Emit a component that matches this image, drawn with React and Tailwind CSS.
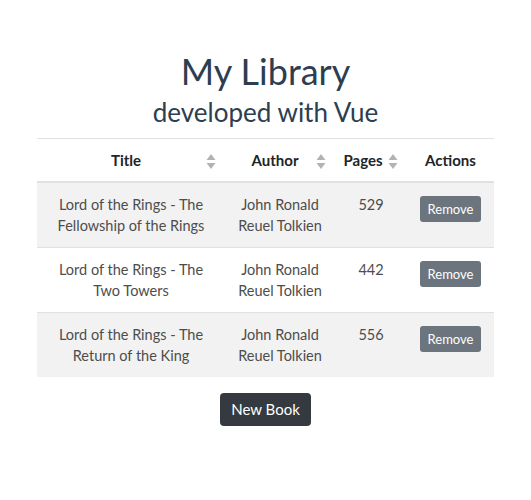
import React from "react";

const books = [
  { title: "Lord of the Rings - The Fellowship of the Rings", author: "John Ronald Reuel Tolkien", pages: 529 },
  { title: "Lord of the Rings - The Two Towers", author: "John Ronald Reuel Tolkien", pages: 442 },
  { title: "Lord of the Rings - The Return of the King", author: "John Ronald Reuel Tolkien", pages: 556 },
];

// up/down sort arrows, as in bootstrap-vue headers
const SortIcon = () => (
  <svg className="absolute right-[9px] top-[15px]" width="10" height="15" viewBox="0 0 10 15">
    <path d="M5 0 L9.5 6 L0.5 6 Z" fill="#b3b3b3" />
    <path d="M5 15 L9.5 9 L0.5 9 Z" fill="#b3b3b3" />
  </svg>
);

const App = () => {
  return (
    <div className="min-h-[500px] w-[531px] bg-white font-['Lato','Liberation_Sans',sans-serif] text-[#2c3e50]">
      <div className="pt-[49px] text-center">
        <h1 className="text-[36px] leading-[44px]">My Library</h1>
        <h2 className="mt-[3px] text-[26px] leading-[32px]">developed with Vue</h2>
      </div>

      <table className="mx-auto mt-[10px] w-[457px] table-fixed border-collapse text-[14.5px] leading-[21px]">
        <colgroup>
          <col className="w-[188px]" />
          <col className="w-[110px]" />
          <col className="w-[72px]" />
          <col className="w-[87px]" />
        </colgroup>
        <thead>
          <tr className="border-t border-[#dee2e6] text-[15px] leading-[20px] text-[#212529]">
            <th className="relative border-b-2 border-[#dee2e6] py-[11px] pr-[22px] pl-3 font-bold">
              Title
              <SortIcon />
            </th>
            <th className="relative border-b-2 border-[#dee2e6] py-[11px] pr-[22px] pl-3 font-bold">
              Author
              <SortIcon />
            </th>
            <th className="relative border-b-2 border-[#dee2e6] py-[11px] pr-[20px] pl-[4px] font-bold">
              Pages
              <SortIcon />
            </th>
            <th className="border-b-2 border-[#dee2e6] py-[11px] font-bold">Actions</th>
          </tr>
        </thead>
        <tbody className="text-[#4d4d4d]">
          {books.map((b, i) => (
            <tr key={i} className={i % 2 === 0 ? "bg-[#f2f2f2]" : "border-y border-[#dee2e6] bg-white"}>
              <td className="px-[12px] py-[11px] align-top text-center">{b.title}</td>
              <td className="px-3 py-[11px] align-top text-center">{b.author}</td>
              <td className="py-[11px] align-top text-center">{b.pages}</td>
              <td className="py-[11px] align-top text-center">
                <button className="mt-[2px] h-[26px] rounded-[3px] bg-[#6c757d] px-[8px] text-[13px] leading-[26px] text-white">
                  Remove
                </button>
              </td>
            </tr>
          ))}
        </tbody>
      </table>

      <div className="mt-[16px] text-center">
        <button className="h-[33px] rounded-[4px] bg-[#343a40] px-[11px] text-[15px] leading-[33px] text-white">
          New Book
        </button>
      </div>
    </div>
  );
};

export default App;
